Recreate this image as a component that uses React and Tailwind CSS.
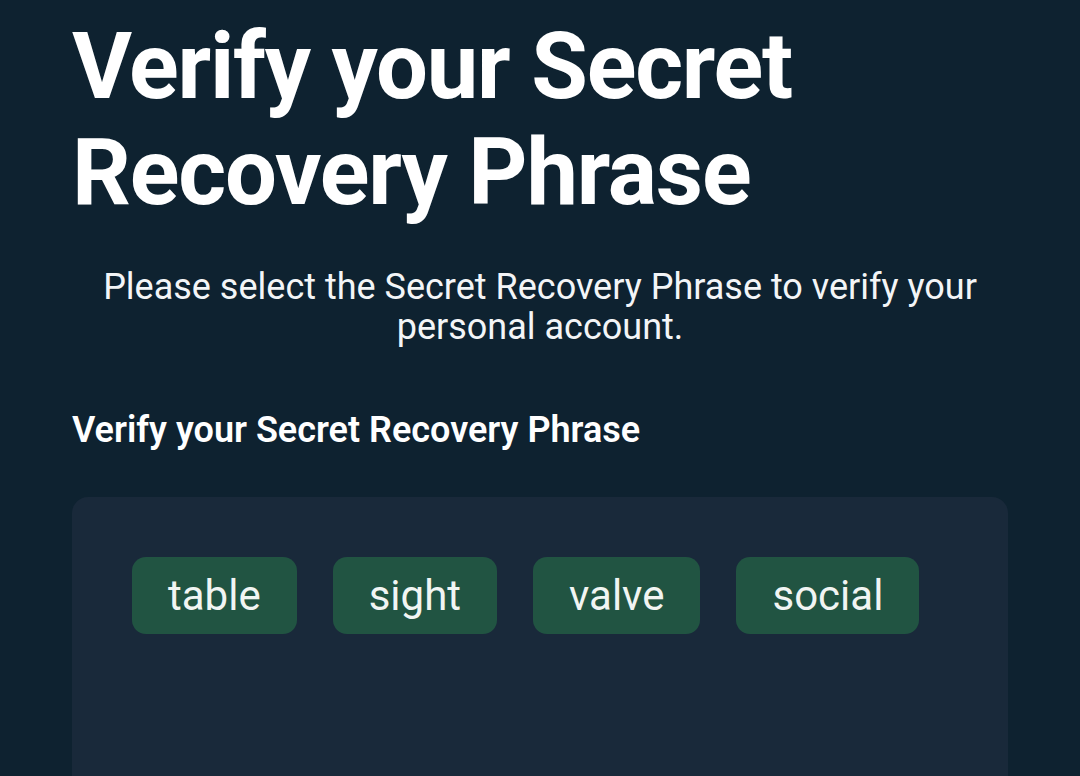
export default function App() {
  const words = ["table", "sight", "valve", "social"];
  return (
    <div
      className="w-[1080px] h-[776px] overflow-hidden bg-[#0e2230] text-white px-[72px]"
      style={{ fontFamily: "Roboto, 'Noto Sans', sans-serif" }}
    >
      <h1 className="text-[92px] font-bold leading-[106px] pt-[14px] tracking-[-1.2px]">
        Verify your Secret
        <br />
        Recovery Phrase
      </h1>
      <p className="mt-[41px] text-center text-[36px] leading-[40px] text-[#f3f5f7] px-[20px]">
        Please select the Secret Recovery Phrase to verify your personal account.
      </p>
      <h2 className="mt-[63px] text-[36px] font-semibold leading-[40px]">
        Verify your Secret Recovery Phrase
      </h2>
      <div className="mt-[47px] bg-[#19293a] rounded-[16px] h-[400px] px-[60px] pt-[60px]">
        <div className="flex gap-[36px]">
          {words.map((w) => (
            <div
              key={w}
              className="h-[77px] px-[36px] rounded-[14px] bg-[#215442] flex items-center justify-center text-[42px] text-[#f1f5f3]"
            >
              {w}
            </div>
          ))}
        </div>
      </div>
    </div>
  );
}
